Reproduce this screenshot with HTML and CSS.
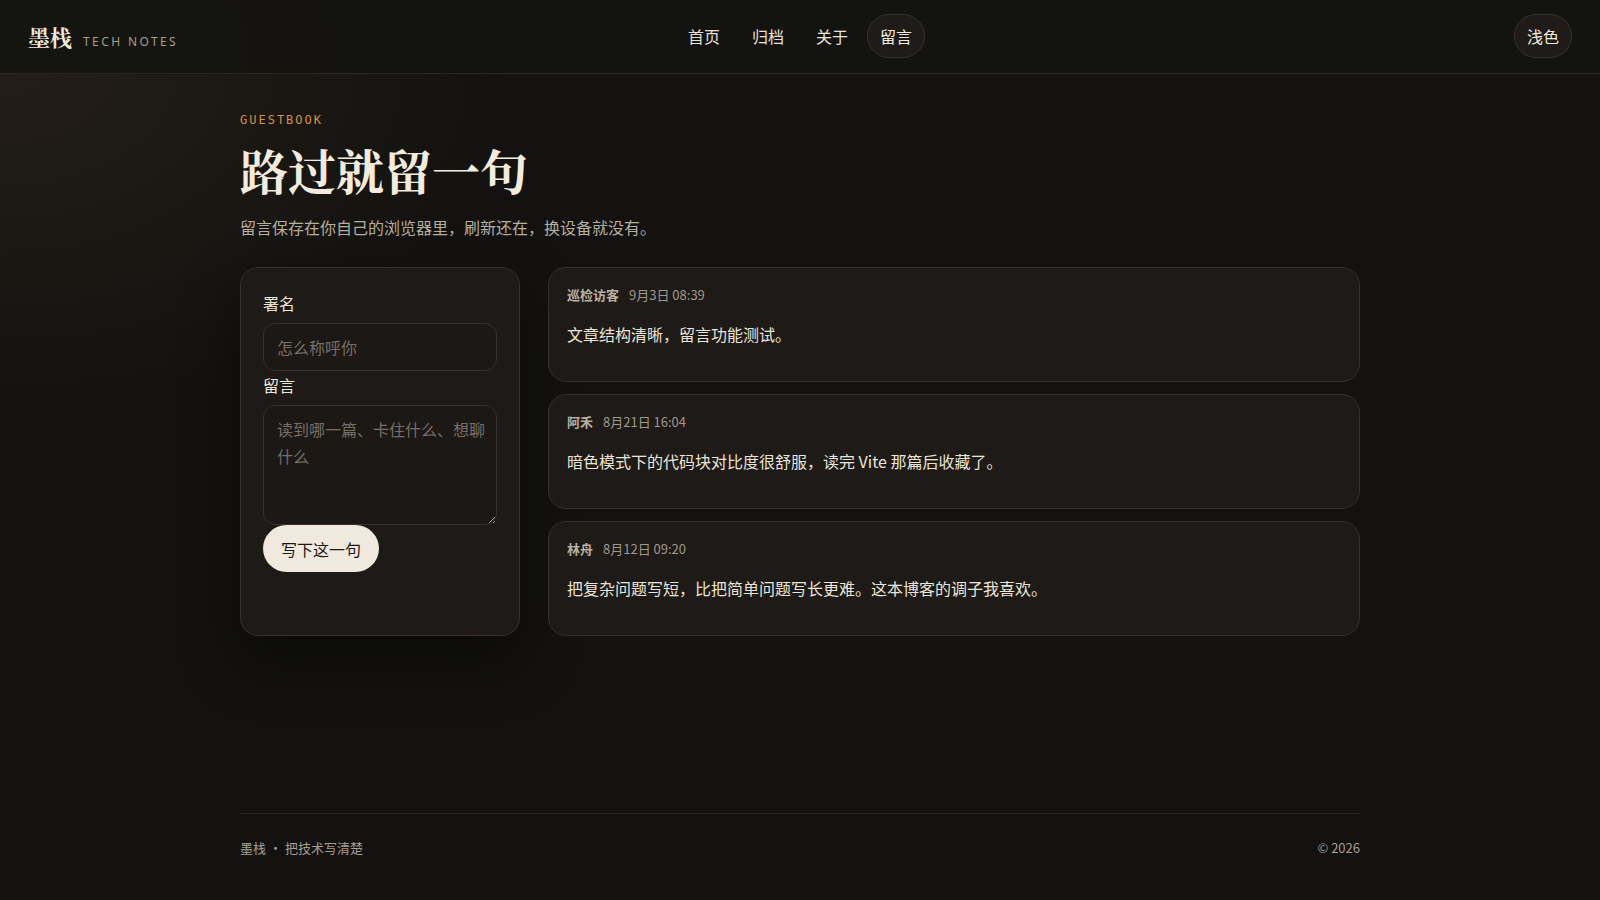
FILE: index.html
```html
<!DOCTYPE html>
<html lang="zh-CN">
<head>
<meta charset="utf-8">
<title>留言 · 墨栈</title>
<link rel="stylesheet" href="styles.css">
</head>
<body>
<header class="site-header">
  <a class="brand" href="#"><span class="brand-name">墨栈</span><span class="brand-sub">TECH NOTES</span></a>
  <nav class="nav">
    <a class="nav-item" href="#">首页</a>
    <a class="nav-item" href="#">归档</a>
    <a class="nav-item" href="#">关于</a>
    <a class="nav-item active" href="#">留言</a>
  </nav>
  <button class="theme-btn" type="button">浅色</button>
</header>

<main class="main">
  <p class="eyebrow">GUESTBOOK</p>
  <h1 class="title">路过就留一句</h1>
  <p class="lead">留言保存在你自己的浏览器里，刷新还在，换设备就没有。</p>

  <div class="board">
    <form class="form-card">
      <label class="field-label" for="name">署名</label>
      <input class="input" id="name" type="text" placeholder="怎么称呼你">
      <label class="field-label second" for="msg">留言</label>
      <textarea class="textarea" id="msg" placeholder="读到哪一篇、卡住什么、想聊什么"></textarea>
      <button class="submit" type="button">写下这一句</button>
    </form>

    <ul class="list">
      <li class="entry">
        <div class="meta"><span class="author">巡检访客</span><span class="date">9月3日 08:39</span></div>
        <p class="body">文章结构清晰，留言功能测试。</p>
      </li>
      <li class="entry">
        <div class="meta"><span class="author">阿禾</span><span class="date">8月21日 16:04</span></div>
        <p class="body">暗色模式下的代码块对比度很舒服，读完 Vite 那篇后收藏了。</p>
      </li>
      <li class="entry">
        <div class="meta"><span class="author">林舟</span><span class="date">8月12日 09:20</span></div>
        <p class="body">把复杂问题写短，比把简单问题写长更难。这本博客的调子我喜欢。</p>
      </li>
    </ul>
  </div>
</main>

<footer class="footer">
  <div class="footer-left">墨栈<span class="dot">·</span>把技术写清楚</div>
  <div class="footer-right">© 2026</div>
</footer>
</body>
</html>
```

FILE: styles.css
```css
* { box-sizing: border-box; }

html, body { margin: 0; padding: 0; }

body {
  min-height: 100vh;
  display: flex;
  flex-direction: column;
  font-family: "Noto Sans CJK SC", "Noto Sans", sans-serif;
  color: #e9e2d6;
  background:
    radial-gradient(ellipse 520px 360px at 0px 60px, rgba(70, 55, 38, 0.32), rgba(70, 55, 38, 0) 100%),
    #131210;
}

a { color: inherit; text-decoration: none; }

/* header */
.site-header {
  display: flex;
  align-items: center;
  justify-content: space-between;
  padding: 14px 28px 15px;
  border-bottom: 1px solid #2a2622;
  background: rgba(20, 19, 17, 0.92);
  position: relative;
}

.brand { display: flex; align-items: baseline; gap: 11px; width: 200px; }

.brand-name {
  font-family: "Noto Serif CJK SC", "Noto Serif SC", "Noto Serif CJK JP", serif;
  font-weight: 700;
  font-size: 22px;
  color: #efe7da;
}

.brand-sub {
  font-family: "Noto Sans", sans-serif;
  font-size: 12px;
  letter-spacing: 2.4px;
  color: #a69e90;
}

.nav {
  position: absolute;
  left: 50%;
  top: 14px;
  transform: translateX(-50%);
  display: flex;
  gap: 6px;
}

.nav-item {
  display: flex;
  align-items: center;
  height: 44px;
  padding: 0 12px;
  border: 1px solid transparent;
  border-radius: 999px;
  font-size: 16px;
  color: #e8e1d5;
}

.nav-item.active {
  background: #1f1b18;
  border-color: #38332d;
  color: #f1eadf;
}

.theme-btn {
  height: 44px;
  padding: 0 12px;
  border: 1px solid #38332d;
  border-radius: 999px;
  background: #1f1b18;
  color: #f1eadf;
  font-family: "Noto Sans CJK SC", sans-serif;
  font-size: 16px;
}

/* main */
.main {
  flex: 1;
  width: 1120px;
  margin: 0 auto;
  padding-top: 38px;
  padding-bottom: 40px;
}

.eyebrow {
  margin: 0;
  font-family: "DejaVu Sans Mono", monospace;
  font-size: 12px;
  line-height: 16px;
  letter-spacing: 2px;
  color: #d39148;
}

.title {
  margin: 13px 0 0;
  font-family: "Noto Serif CJK SC", "Noto Serif SC", "Noto Serif CJK JP", serif;
  font-weight: 700;
  font-size: 48px;
  line-height: 58px;
  color: #f2ebde;
}

.lead {
  margin: 15px 0 0;
  font-size: 16px;
  line-height: 26px;
  color: #b6ae9f;
}

.board {
  margin-top: 27px;
  display: grid;
  grid-template-columns: 280px 1fr;
  gap: 28px;
}

/* form */
.form-card {
  display: flex;
  flex-direction: column;
  align-items: flex-start;
  padding: 22px 22px;
  background: #1e1a17;
  border: 1px solid #35302a;
  border-radius: 18px;
  box-shadow: 0 24px 60px rgba(0, 0, 0, 0.45);
}

.field-label {
  font-size: 16px;
  line-height: 24px;
  color: #ece5d9;
  margin-top: 1px;
  margin-bottom: 8px;
}

.field-label.second { margin-top: 2px; margin-bottom: 8px; }

.input, .textarea {
  width: 100%;
  background: #1b1815;
  border: 1px solid #38322c;
  border-radius: 12px;
  color: #e9e2d6;
  font-family: "Noto Sans CJK SC", sans-serif;
  font-size: 16px;
  outline: none;
}

.input {
  height: 48px;
  padding: 0 13px;
}

.textarea {
  height: 120px;
  padding: 10px 11px 10px 13px;
  line-height: 27px;
  resize: vertical;
  display: block;
}

.input::placeholder, .textarea::placeholder { color: #766f65; }

.submit {
  height: 47px;
  padding: 0 18px;
  border: none;
  border-radius: 999px;
  background: #f0e9dd;
  color: #1c1815;
  font-family: "Noto Sans CJK SC", sans-serif;
  font-size: 16px;
}

/* list */
.list {
  list-style: none;
  margin: 0;
  padding: 0;
  display: flex;
  flex-direction: column;
  gap: 12px;
}

.entry {
  height: 115px;
  padding: 17px 18px;
  background: #1e1a17;
  border: 1px solid #35302a;
  border-radius: 18px;
}

.meta {
  display: flex;
  gap: 10px;
  font-size: 13px;
  line-height: 20px;
}

.author { font-weight: 700; color: #b9b0a1; }
.date { color: #a0988b; }

.body {
  margin: 15px 0 0;
  font-size: 16px;
  line-height: 28px;
  color: #ebe4d8;
}

/* footer */
.footer {
  width: 1120px;
  margin: 0 auto;
  display: flex;
  justify-content: space-between;
  border-top: 1px solid #2a2622;
  padding: 24px 0 42px;
  font-size: 13px;
  line-height: 20px;
  color: #a69e91;
}

.dot { margin: 0 3px; }
```
